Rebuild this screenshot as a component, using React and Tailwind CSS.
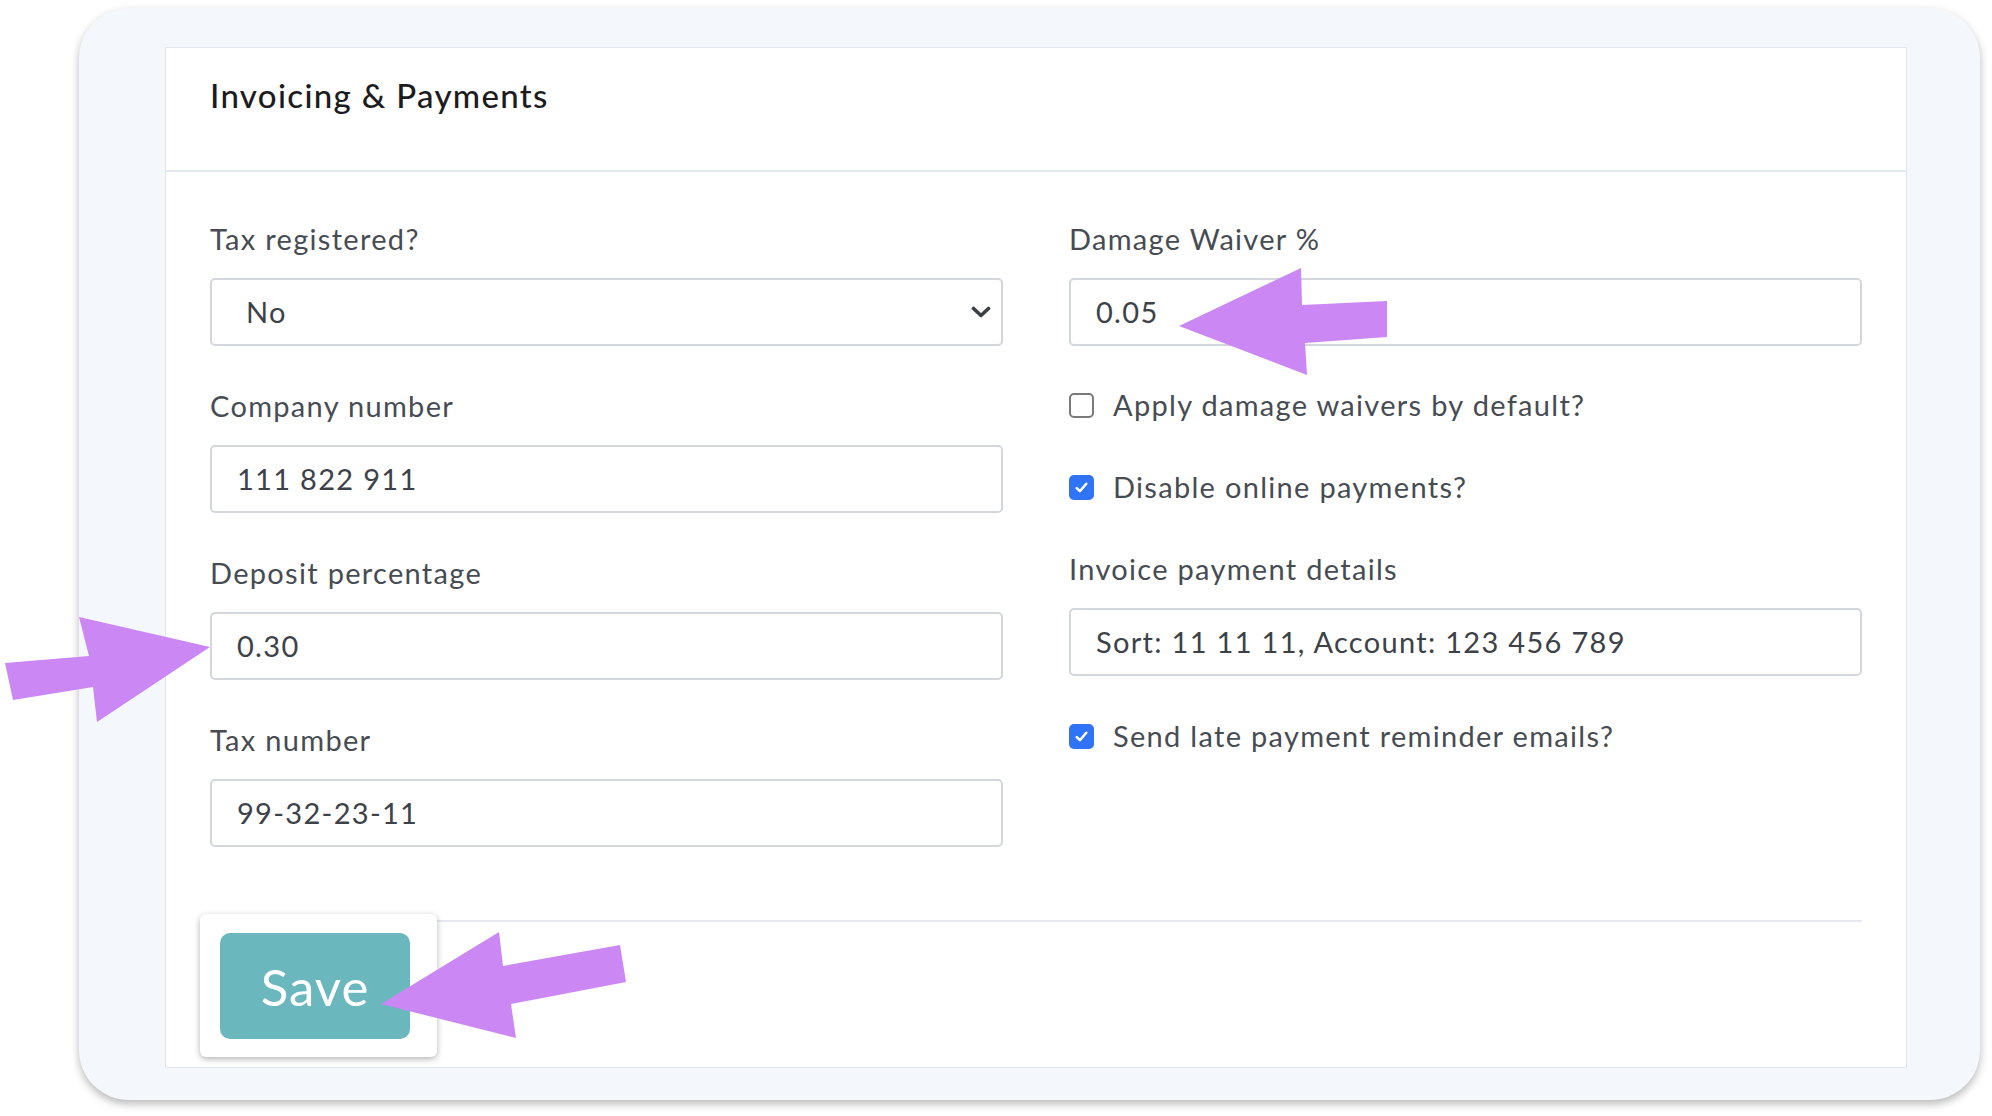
import React from 'react';

function Field({ label, children, className = '' }) {
  return (
    <div className={className}>
      <div className="h-[40px] leading-[40px] text-[29px] tracking-[0.045em] text-[#474c53] mb-[19px]">{label}</div>
      {children}
    </div>
  );
}

function TextBox({ value }) {
  return (
    <div className="h-[68px] border-2 border-[#d3d7dc] rounded-[5px] bg-white flex items-center pl-[25px] text-[29px] tracking-[0.045em] text-[#3d4248]">
      {value}
    </div>
  );
}

function Check({ checked, label, className = '' }) {
  return (
    <div className={'h-[40px] flex items-center ' + className}>
      {checked ? (
        <div className="w-[25px] h-[25px] rounded-[5px] bg-[#2f74f6] flex items-center justify-center">
          <svg width="17" height="17" viewBox="0 0 16 16" fill="none">
            <path d="M3.5 8.5l3 3 6-7" stroke="white" strokeWidth="2.4" strokeLinecap="round" strokeLinejoin="round" />
          </svg>
        </div>
      ) : (
        <div className="w-[25px] h-[25px] rounded-[5px] border-2 border-[#7a7a7a] bg-white" />
      )}
      <span className="ml-[19px] text-[29px] tracking-[0.045em] text-[#474c53]">{label}</span>
    </div>
  );
}

export default function App() {
  return (
    <div className="relative w-[1992px] h-[1116px] bg-white overflow-hidden" style={{ fontFamily: 'Lato, "Open Sans", sans-serif' }}>
      <div className="pl-[79px] pt-[8px]">
        <div className="w-[1901px] h-[1092px] rounded-[50px] bg-[#f4f7fb] shadow-[0_4px_8px_rgba(0,0,0,0.28)] pt-[39px] pl-[86px] pr-[73px]">
          <div className="h-[1021px] bg-white border border-[#e3e7ef]">
            <div className="h-[124px] border-b-2 border-[#e3e7f0] px-[44px] pt-[27px]">
              <h1 className="text-[33px] leading-[40px] font-medium tracking-[0.04em] text-[#1c1c1e]">Invoicing &amp; Payments</h1>
            </div>

            <div className="px-[44px] pt-[47px]">
              <div className="grid grid-cols-2 gap-x-[66px]">
                <div className="flex flex-col gap-[40px]">
                  <Field label="Tax registered?">
                    <div className="h-[68px] border-2 border-[#d3d7dc] rounded-[5px] bg-white flex items-center justify-between pl-[34px] pr-[10px] text-[29px] tracking-[0.045em] text-[#3d4248]">
                      <span>No</span>
                      <svg width="20" height="12" viewBox="0 0 20 12" fill="none">
                        <path d="M2.5 2.5l7.5 7 7.5-7" stroke="#3a3f45" strokeWidth="3.6" strokeLinecap="round" strokeLinejoin="round" />
                      </svg>
                    </div>
                  </Field>
                  <Field label="Company number">
                    <TextBox value="111 822 911" />
                  </Field>
                  <Field label="Deposit percentage">
                    <TextBox value="0.30" />
                  </Field>
                  <Field label="Tax number">
                    <TextBox value="99-32-23-11" />
                  </Field>
                </div>

                <div className="flex flex-col">
                  <Field label="Damage Waiver %">
                    <TextBox value="0.05" />
                  </Field>
                  <Check className="mt-[39px]" label="Apply damage waivers by default?" />
                  <Check className="mt-[42px]" checked label="Disable online payments?" />
                  <Field className="mt-[42px]" label="Invoice payment details">
                    <TextBox value="Sort: 11 11 11, Account: 123 456 789" />
                  </Field>
                  <Check className="mt-[40px]" checked label="Send late payment reminder emails?" />
                </div>
              </div>

              <div className="mt-[73px] border-t-2 border-[#e6e9ee]">
                <div className="-mt-[8px] -ml-[10px] w-[237px] h-[143px] bg-white rounded-[6px] shadow-[0_2px_6px_rgba(0,0,0,0.3)] pt-[19px] pl-[20px]">
                  <button className="w-[190px] h-[106px] rounded-[10px] bg-[#6ab7bd] text-white text-[51px] tracking-[0.02em] leading-none">
                    Save
                  </button>
                </div>
              </div>
            </div>
          </div>
        </div>
      </div>

      <svg className="absolute inset-0 pointer-events-none" width="1992" height="1116" viewBox="0 0 1992 1116">
        <polygon fill="#cb87f4" points="1179,326 1301,268 1302,305 1387,301 1387,337 1305,343 1307,375" />
        <polygon fill="#cb87f4" points="210,647 79,617 89,656 5,663 13,700 93,687 97,722" />
        <polygon fill="#cb87f4" points="381,1004 499,932 503,966 620,945 626,982 511,1004 516,1038" />
      </svg>
    </div>
  );
}
